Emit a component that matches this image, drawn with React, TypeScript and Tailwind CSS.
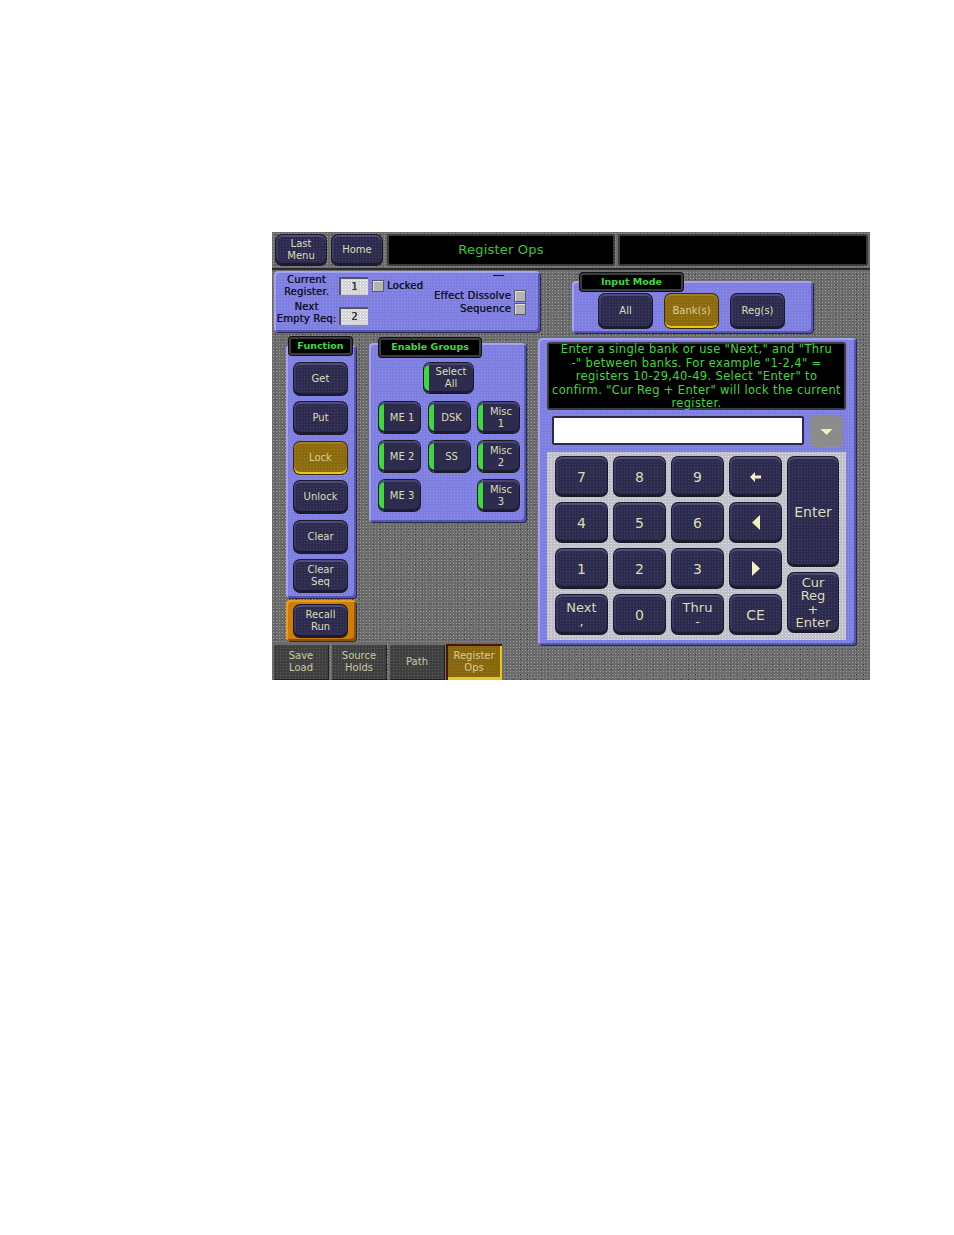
import type { ReactNode } from 'react'

const face = "font-['DejaVu_Sans',sans-serif]"
const lilac =
  'bg-[#7f7fe2] bg-[radial-gradient(circle,#a5a5f088_0.7px,transparent_0.8px)] bg-[length:3px_3px] rounded-[4px] shadow-[inset_2px_2px_0_#a3a3f2,inset_-2px_-2px_0_#5555b4,1px_1px_0_#2a2a50]'

function Key({
  w,
  h,
  gold,
  green,
  text = 'text-[10px] leading-[12px]',
  children,
}: {
  w: string
  h: string
  gold?: boolean
  green?: boolean
  text?: string
  children: ReactNode
}) {
  const skin = gold
    ? 'bg-[#8b6a10] bg-[radial-gradient(circle,#b8921c88_0.7px,transparent_0.8px)] bg-[length:3px_3px] shadow-[inset_0_-2px_0_#e8c81c,inset_0_2px_0_#a08020,0_0_0_1px_#3a2c08] text-[#d8cc98]'
    : green
      ? 'bg-[linear-gradient(90deg,#3fd83f_0,#3fd83f_5px,#2e2c4e_5px)] shadow-[inset_0_2px_0_#46446e,inset_0_-2px_0_#1c1b32,0_0_0_1px_#1a1a26] text-[#dcdcb8]'
      : 'bg-[#2e2c4e] bg-[radial-gradient(circle,#56547a8c_0.6px,transparent_0.7px)] bg-[length:3px_3px] shadow-[inset_0_2px_0_#4e4c7c,inset_0_-2px_0_#1c1b32,inset_2px_0_0_#3a3864,0_0_0_1px_#1a1a26] text-[#dcdcb8]'
  return (
    <div
      className={`${w} ${h} ${skin} ${text} rounded-[6px] flex flex-col items-center justify-center text-center shrink-0 ${green ? 'pl-[5px]' : ''}`}
    >
      {children}
    </div>
  )
}

function Tag({ className, children }: { className: string; children: ReactNode }) {
  return (
    <div
      className={`${className} absolute bg-black rounded-[3px] border-2 border-[#3c3c3c] shadow-[0_0_0_1px_#111] text-[#3fd83f] text-[9.5px] font-bold flex items-center justify-center`}
    >
      {children}
    </div>
  )
}

function Box() {
  return (
    <div className="w-[12px] h-[12px] bg-[#b4b4b4] border border-[#5a5a6a] shadow-[inset_1px_1px_0_#e0e0e0] shrink-0" />
  )
}

function Field({ value }: { value: string }) {
  return (
    <div className="w-[29px] h-[18px] bg-[#d4d4d8] bg-[radial-gradient(circle,#ffffff_0.7px,transparent_0.8px)] bg-[length:3px_3px] border-t-2 border-l-2 border-[#55556a] text-[#333] text-[10px] flex items-center justify-center">
      {value}
    </div>
  )
}

function Tab({ active, children }: { active?: boolean; children: ReactNode }) {
  return (
    <div
      className={`w-[56px] h-[36px] text-[10px] leading-[12px] flex flex-col items-center justify-center text-center last:-ml-px ${
        active
          ? 'bg-[#86660f] bg-[radial-gradient(circle,#b08a1a88_0.7px,transparent_0.8px)] bg-[length:3px_3px] shadow-[inset_2px_2px_0_#4a1408,inset_-2px_-3px_0_#e8c81c] text-[#d8cc94]'
          : 'bg-[#404040] bg-[radial-gradient(circle,#5e5e5e_0.7px,transparent_0.8px)] bg-[length:3px_3px] shadow-[inset_1px_1px_0_#6c6c6c,inset_-1px_-1px_0_#222] text-[#c8c8a0]'
      }`}
    >
      {children}
    </div>
  )
}

const pad = 'text-[14px] leading-[14px]'
const dark = 'text-[#15152c] [text-shadow:0.3px_0_0_#15152c] tracking-[0.2px]'

export default function App() {
  return (
    <div className={`${face} bg-white w-[954px] h-[1235px] pt-[232px] pl-[272px]`}>
      <div className="w-[598px] h-[448px] bg-[#6c6c6c] bg-[radial-gradient(circle,#9a9a9a_0.6px,transparent_0.7px),radial-gradient(circle,#3a3a3a_0.6px,transparent_0.7px)] bg-[length:3px_3px,7px_5px] overflow-hidden">
        {/* header */}
        <div className="flex items-center h-[38px] pt-[2px] pb-[2px] pl-[4px] border-b-2 border-[#2c2c2c]">
          <Key w="w-[50px]" h="h-[30px]">
            <span>Last</span>
            <span>Menu</span>
          </Key>
          <div className="w-[6px]" />
          <Key w="w-[50px]" h="h-[30px]">
            Home
          </Key>
          <div className="w-[228px] h-[32px] ml-[5px] bg-black rounded-[3px] border-2 border-[#3c3c3c] text-[#35c835] text-[13px] tracking-[0.2px] flex items-center justify-center">
            Register Ops
          </div>
          <div className="w-[250px] h-[32px] ml-[3px] bg-black rounded-[3px] border-2 border-[#3c3c3c]" />
        </div>

        {/* register status + input mode */}
        <div className="flex pl-[2px] h-[67px]">
          <div className={`${lilac} ${dark} w-[266px] h-[61px] mt-[1px] flex text-[10px] leading-[12px]`}>
            <div className="w-[65px] flex flex-col pt-[3px] shrink-0 text-center">
              <div className="h-[27px]">
                Current
                <br />
                Register.
              </div>
              <div>
                Next
                <br />
                <span className="whitespace-nowrap">Empty Req:</span>
              </div>
            </div>
            <div className="flex flex-col gap-[12px] pt-[6px]">
              <Field value="1" />
              <Field value="2" />
            </div>
            <div className="flex h-[14px] mt-[8px] ml-[4px] gap-[3px] items-center">
              <Box />
              Locked
            </div>
            <div className="flex flex-col flex-1 items-end pr-[14px]">
              <div className="w-[11px] h-px bg-[#15152c] mt-[4px] mr-[22px]" />
              <div className="flex gap-[3px] items-center mt-[14px] whitespace-nowrap">
                Effect Dissolve
                <Box />
              </div>
              <div className="flex gap-[3px] items-center mt-[1px]">
                Sequence
                <Box />
              </div>
            </div>
          </div>
          <div className={`${lilac} relative w-[241px] h-[52px] ml-[32px] mt-[11px] flex gap-[13px] pl-[27px] pt-[13px]`}>
            <Tag className="-top-[8px] left-[8px] w-[103px] h-[18px]">Input Mode</Tag>
            <Key w="w-[53px]" h="h-[34px]">
              All
            </Key>
            <Key w="w-[53px]" h="h-[34px]" gold>
              Bank(s)
            </Key>
            <Key w="w-[53px]" h="h-[34px]">
              Reg(s)
            </Key>
          </div>
        </div>

        {/* main row */}
        <div className="flex h-[307px]">
          <div className="ml-[14px] w-[70px] shrink-0">
            <div className={`${lilac} relative h-[253px] mt-[8px] flex flex-col items-start gap-[7.4px] pt-[18px] pl-[8px]`}>
              <Tag className="-top-[8px] left-[3px] w-[63px] h-[18px]">Function</Tag>
              <Key w="w-[53px]" h="h-[32px]">
                Get
              </Key>
              <Key w="w-[53px]" h="h-[32px]">
                Put
              </Key>
              <Key w="w-[53px]" h="h-[32px]" gold>
                Lock
              </Key>
              <Key w="w-[53px]" h="h-[32px]">
                Unlock
              </Key>
              <Key w="w-[53px]" h="h-[32px]">
                Clear
              </Key>
              <Key w="w-[53px]" h="h-[32px]">
                <span>Clear</span>
                <span>Seq</span>
              </Key>
            </div>
            <div className="h-[41px] mt-[2px] pl-[8px] rounded-[4px] bg-[#d07c08] shadow-[inset_2px_2px_0_#e89c20,inset_-2px_-2px_0_#8a5204,1px_1px_0_#2a2a50] flex items-center">
              <Key w="w-[53px]" h="h-[32px]">
                <span>Recall</span>
                <span>Run</span>
              </Key>
            </div>
          </div>

          <div className={`${lilac} relative w-[157px] h-[179px] ml-[13px] mt-[6px] shrink-0 pt-[20px]`}>
            <Tag className="-top-[5px] left-[10px] w-[102px] h-[19px]">Enable Groups</Tag>
            <div className="ml-[55px]">
              <Key w="w-[49px]" h="h-[30px]" green>
                <span>Select</span>
                <span>All</span>
              </Key>
            </div>
            <div className="grid grid-cols-[41px_41px_41px] gap-x-[8.5px] gap-y-[8px] mt-[9px] ml-[10px]">
              <Key w="w-[41px]" h="h-[31px]" green>
                ME 1
              </Key>
              <Key w="w-[41px]" h="h-[31px]" green>
                DSK
              </Key>
              <Key w="w-[41px]" h="h-[31px]" green>
                <span>Misc</span>
                <span>1</span>
              </Key>
              <Key w="w-[41px]" h="h-[31px]" green>
                ME 2
              </Key>
              <Key w="w-[41px]" h="h-[31px]" green>
                SS
              </Key>
              <Key w="w-[41px]" h="h-[31px]" green>
                <span>Misc</span>
                <span>2</span>
              </Key>
              <Key w="w-[41px]" h="h-[31px]" green>
                ME 3
              </Key>
              <div />
              <Key w="w-[41px]" h="h-[31px]" green>
                <span>Misc</span>
                <span>3</span>
              </Key>
            </div>
          </div>

          <div className={`${lilac} w-[318px] h-[307px] ml-[12px] mt-[1px] shrink-0 pt-[4px] pl-[9px]`}>
            <div className="w-[299px] h-[68px] pt-[2px] bg-black rounded-[3px] border-2 border-[#3c3c3c] text-[#3fd83f] text-[11.5px] leading-[13.5px] tracking-[0.35px] text-center whitespace-nowrap flex items-center justify-center">
              <p>
                Enter a single bank or use "Next," and "Thru
                <br />
                -" between banks. For example "1-2,4" =
                <br />
                registers 10-29,40-49. Select "Enter" to
                <br />
                confirm. "Cur Reg + Enter" will lock the current
                <br />
                register.
              </p>
            </div>
            <div className="flex mt-[6px] ml-[5px] gap-[6px]">
              <div className="w-[252px] h-[29px] bg-white border-2 border-[#2b2b44] rounded-[2px]" />
              <div className="w-[33px] h-[31px] rounded-[5px] bg-[#8c8c8c] flex items-center justify-center">
                <svg width="13" height="6" viewBox="0 0 14 7">
                  <path d="M0 0H14L7 7Z" fill="#f4f0b8" />
                </svg>
              </div>
            </div>
            <div className="w-[299px] h-[188px] mt-[5px] bg-[#c0c0ca] bg-[radial-gradient(circle,#e4e4e8_0.7px,transparent_0.8px)] bg-[length:3px_3px] pl-[9px] pt-[5px] flex gap-[7px]">
              <div className="grid grid-cols-[51px_51px_51px_51px] gap-[7px] content-start">
                <Key w="w-[51px]" h="h-[39px]" text={pad}>
                  7
                </Key>
                <Key w="w-[51px]" h="h-[39px]" text={pad}>
                  8
                </Key>
                <Key w="w-[51px]" h="h-[39px]" text={pad}>
                  9
                </Key>
                <Key w="w-[51px]" h="h-[39px]" text={pad}>
                  <svg width="12" height="10" viewBox="0 0 12 10">
                    <path d="M0 5L5 0V3.5H11V6.5H5V10Z" fill="#f4f0c0" />
                  </svg>
                </Key>
                <Key w="w-[51px]" h="h-[39px]" text={pad}>
                  4
                </Key>
                <Key w="w-[51px]" h="h-[39px]" text={pad}>
                  5
                </Key>
                <Key w="w-[51px]" h="h-[39px]" text={pad}>
                  6
                </Key>
                <Key w="w-[51px]" h="h-[39px]" text={pad}>
                  <svg width="8" height="15" viewBox="0 0 8 15">
                    <path d="M8 0V15L0 7.5Z" fill="#f4f0c0" />
                  </svg>
                </Key>
                <Key w="w-[51px]" h="h-[39px]" text={pad}>
                  1
                </Key>
                <Key w="w-[51px]" h="h-[39px]" text={pad}>
                  2
                </Key>
                <Key w="w-[51px]" h="h-[39px]" text={pad}>
                  3
                </Key>
                <Key w="w-[51px]" h="h-[39px]" text={pad}>
                  <svg width="8" height="15" viewBox="0 0 8 15">
                    <path d="M0 0V15L8 7.5Z" fill="#f4f0c0" />
                  </svg>
                </Key>
                <Key w="w-[51px]" h="h-[39px]" text="text-[13px] leading-[14px]">
                  <span>Next</span>
                  <span>,</span>
                </Key>
                <Key w="w-[51px]" h="h-[39px]" text={pad}>
                  0
                </Key>
                <Key w="w-[51px]" h="h-[39px]" text="text-[13px] leading-[14px]">
                  <span>Thru</span>
                  <span>-</span>
                </Key>
                <Key w="w-[51px]" h="h-[39px]" text={pad}>
                  CE
                </Key>
              </div>
              <div className="flex flex-col gap-[7px]">
                <Key w="w-[50px]" h="h-[109px]" text={pad}>
                  Enter
                </Key>
                <Key w="w-[50px]" h="h-[59px]" text="text-[13px] leading-[13.5px]">
                  <span>Cur</span>
                  <span>Reg</span>
                  <span>+</span>
                  <span>Enter</span>
                </Key>
              </div>
            </div>
          </div>
        </div>

        {/* bottom tabs */}
        <div className="flex pl-[1px] gap-[2px]">
          <Tab>
            <span>Save</span>
            <span>Load</span>
          </Tab>
          <Tab>
            <span>Source</span>
            <span>Holds</span>
          </Tab>
          <Tab>Path</Tab>
          <Tab active>
            <span>Register</span>
            <span>Ops</span>
          </Tab>
        </div>
      </div>
    </div>
  )
}
